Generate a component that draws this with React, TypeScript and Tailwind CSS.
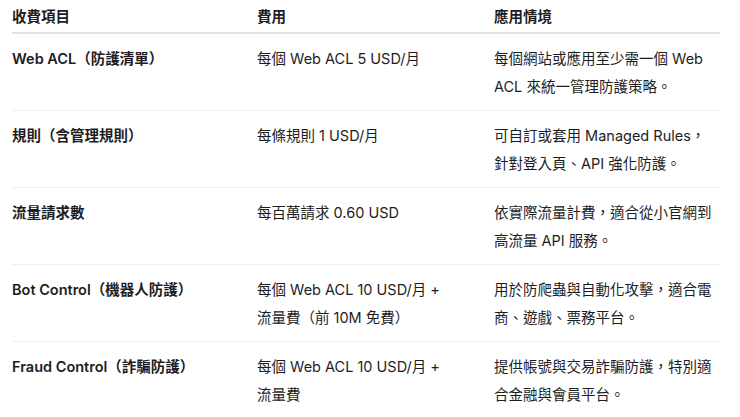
const rows: { item: string; price: string[]; use: string }[] = [
  { item: 'Web ACL（防護清單）', price: ['每個 Web ACL 5 USD/月'], use: '每個網站或應用至少需一個 Web ACL 來統一管理防護策略。' },
  { item: '規則（含管理規則）', price: ['每條規則 1 USD/月'], use: '可自訂或套用 Managed Rules，針對登入頁、API 強化防護。' },
  { item: '流量請求數', price: ['每百萬請求 0.60 USD'], use: '依實際流量計費，適合從小官網到高流量 API 服務。' },
  { item: 'Bot Control（機器人防護）', price: ['每個 Web ACL 10 USD/月 +', '流量費（前 10M 免費）'], use: '用於防爬蟲與自動化攻擊，適合電商、遊戲、票務平台。' },
  { item: 'Fraud Control（詐騙防護）', price: ['每個 Web ACL 10 USD/月 +', '流量費'], use: '提供帳號與交易詐騙防護，特別適合金融與會員平台。' },
];

const font = { fontFamily: 'Inter, "Noto Sans CJK TC", sans-serif' };

export default function App() {
  return (
    <div className="bg-white w-[740px] h-[417px] overflow-hidden text-[14.5px] leading-[28px] text-[#1d1d1f]" style={font}>
      <div className="ml-[12px] w-[708px]">
        {/* header */}
        <div className="grid grid-cols-[245px_237px_226px] pt-[3px] pb-[1px] border-b-2 border-[#e3e3e3] font-semibold">
          <div>收費項目</div>
          <div>費用</div>
          <div>應用情境</div>
        </div>
        {rows.map((r) => (
          <div key={r.item} className="grid grid-cols-[245px_237px_226px] pt-[11px] pb-[9px] border-b border-[#efefef]">
            <div className="font-semibold pr-3">{r.item}</div>
            <div className="pr-3">
              {r.price.map((p) => (
                <div key={p}>{p}</div>
              ))}
            </div>
            <div className="pr-[6px]">{r.use}</div>
          </div>
        ))}
      </div>
    </div>
  );
}
